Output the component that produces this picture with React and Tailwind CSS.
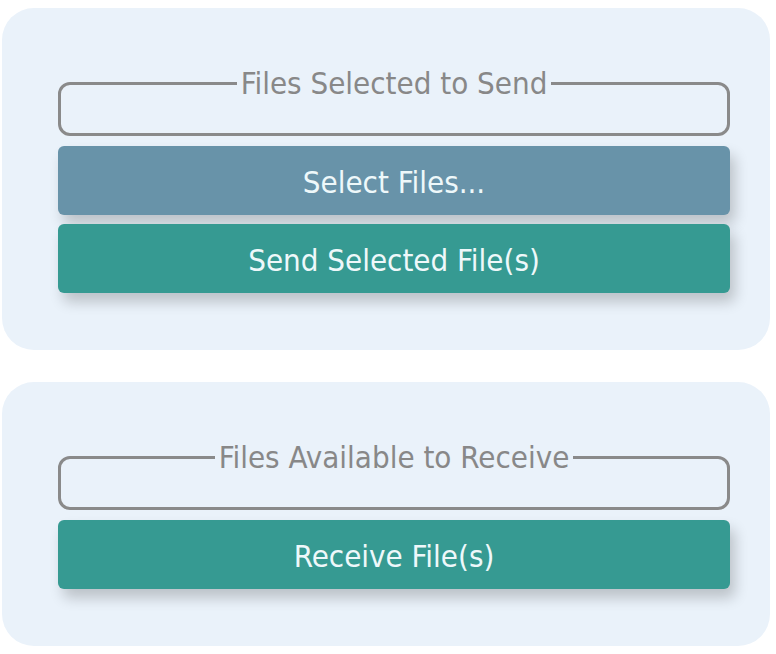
import React from "react";

const font = { fontFamily: '"DejaVu Sans Condensed", "DejaVu Sans", sans-serif' };

const FileBox = ({ label }) => (
  <fieldset className="h-[68px] rounded-[12px] border-[3px] border-[#8a8a8a]">
    <legend className="mx-auto px-[4px] text-[31px] leading-[30px] text-[#888888]">{label}</legend>
  </fieldset>
);

const Button = ({ children, color }) => (
  <button
    className={`flex h-[69px] w-full items-center justify-center rounded-[6px] pt-[3px] text-[31px] text-[#eef8fa] shadow-[5px_9px_14px_rgba(0,0,0,0.2)] ${color}`}
  >
    {children}
  </button>
);

export default function App() {
  return (
    <div className="min-h-[654px] bg-white pt-[8px] pl-[2px]" style={font}>
      {/* Send */}
      <div className="w-[768px] rounded-[32px] bg-[#eaf2fa] pt-[60px] pb-[57px] pl-[56px] pr-[40px]">
        <FileBox label="Files Selected to Send" />
        <div className="mt-[10px] space-y-[9px]">
          <Button color="bg-[#6893a9]">Select Files...</Button>
          <Button color="bg-[#369a92]">Send Selected File(s)</Button>
        </div>
      </div>

      {/* Receive */}
      <div className="mt-[32px] w-[768px] rounded-[32px] bg-[#eaf2fa] pt-[60px] pb-[57px] pl-[56px] pr-[40px]">
        <FileBox label="Files Available to Receive" />
        <div className="mt-[10px]">
          <Button color="bg-[#369a92]">Receive File(s)</Button>
        </div>
      </div>
    </div>
  );
}
